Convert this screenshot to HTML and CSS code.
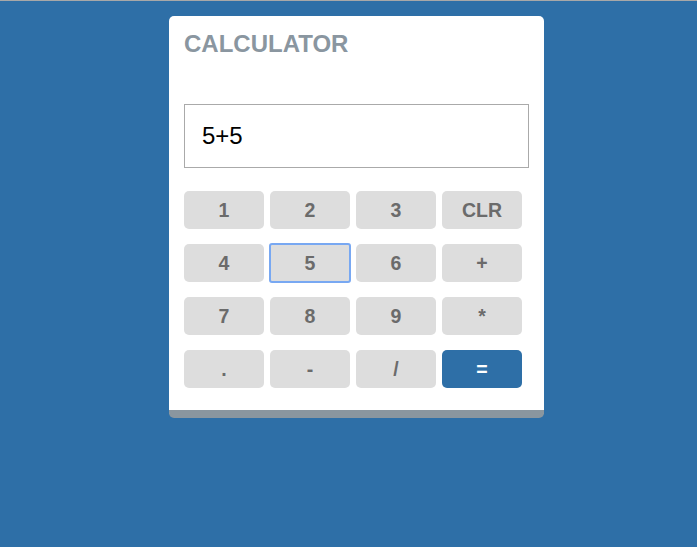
FILE: index.html
```html
<!DOCTYPE html>
<html lang="en">
<head>
<meta charset="utf-8">
<title>Calculator</title>
<link rel="stylesheet" href="styles.css">
</head>
<body>
<div class="page">
  <div class="calc">
    <h1 class="title">CALCULATOR</h1>
    <div class="display">5+5</div>
    <div class="keys">
      <button class="key">1</button>
      <button class="key">2</button>
      <button class="key">3</button>
      <button class="key">CLR</button>
      <button class="key">4</button>
      <button class="key key-focus">5</button>
      <button class="key">6</button>
      <button class="key">+</button>
      <button class="key">7</button>
      <button class="key">8</button>
      <button class="key">9</button>
      <button class="key">*</button>
      <button class="key">.</button>
      <button class="key">-</button>
      <button class="key">/</button>
      <button class="key key-eq">=</button>
    </div>
  </div>
</div>
</body>
</html>
```
FILE: styles.css
```css
html {
  background: #2e6fa7;
  border-top: 1px solid #a8a8a8;
  height: 100%;
  box-sizing: border-box;
}
body {
  margin: 0;
  font-family: "Liberation Sans", Arial, sans-serif;
}
.page {
  padding: 15px 0 0 169px;
}
.calc {
  width: 375px;
  box-sizing: border-box;
  background: #fff;
  border-radius: 5px;
  border-bottom: 8px solid #8a969f;
  padding: 14px 15px 22px;
}
.title {
  margin: 0 0 46px;
  font-size: 24px;
  line-height: 28px;
  font-weight: bold;
  color: #8a96a0;
}
.display {
  height: 62px;
  border: 1px solid #aaaaaa;
  padding: 0 17px;
  font-size: 24px;
  line-height: 62px;
  color: #000;
  margin-bottom: 23px;
}
.keys {
  display: grid;
  grid-template-columns: repeat(4, 80px);
  column-gap: 6px;
  row-gap: 15px;
}
.key {
  height: 38px;
  border: none;
  border-radius: 5px;
  background: #dddddd;
  color: #6b6b6b;
  font-family: "Liberation Sans", Arial, sans-serif;
  font-weight: bold;
  font-size: 19.5px;
  padding: 0;
}
.key-focus {
  border-radius: 2px;
  outline: 2px solid #78a8f2;
  outline-offset: -1px;
}
.key-eq {
  background: #2e6fa7;
  color: #fff;
}
```
